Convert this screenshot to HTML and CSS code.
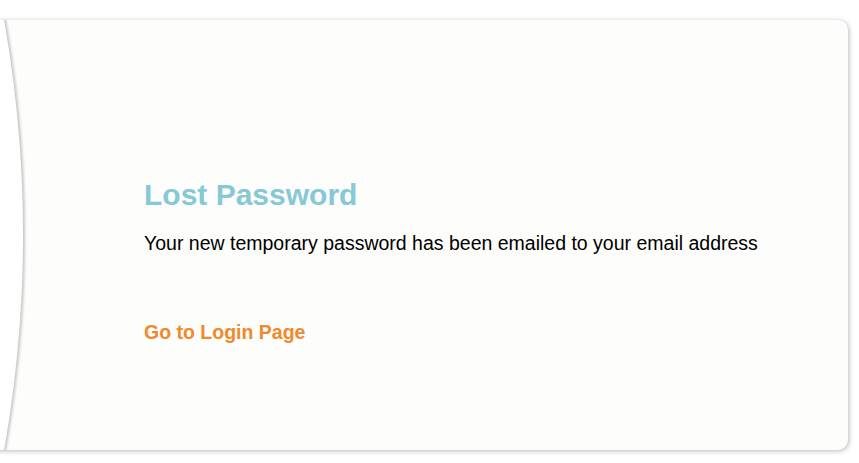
FILE: index.html
```html
<!DOCTYPE html>
<html>
<head>
<meta charset="utf-8">
<title>Lost Password</title>
<link rel="stylesheet" href="styles.css">
</head>
<body>
<div class="card">
  <div class="content">
    <h1 class="title">Lost Password</h1>
    <p class="message">Your new temporary password has been emailed to your email address</p>
    <a class="login-link" href="#">Go to Login Page</a>
  </div>
</div>
</body>
</html>
```

FILE: styles.css
```css
html, body {
  margin: 0;
  padding: 0;
  background: #ffffff;
  overflow: hidden;
}

body {
  font-family: "Liberation Sans", Arial, sans-serif;
  width: 859px;
  height: 463px;
}

.card {
  position: relative;
  overflow: hidden;
  box-sizing: border-box;
  margin: 20px 11px 0 -10px;
  height: 430px;
  background: #fdfdfb;
  border-radius: 0 10px 10px 0;
  box-shadow: 1px 1px 5px rgba(0, 0, 0, 0.28);
}

.card::before {
  content: "";
  position: absolute;
  width: 2452px;
  height: 2452px;
  border-radius: 50%;
  left: calc(33px - 2452px);
  top: calc(215px - 1226px);
  background: #ffffff;
  box-shadow: 2px 0 3px rgba(0, 0, 0, 0.22);
}

.content {
  position: relative;
  padding: 157px 0 0 154px;
}

.title {
  margin: 0;
  font-size: 30px;
  line-height: 36px;
  font-weight: bold;
  color: #86c9d6;
}

.message {
  margin: 18px 0 0 0;
  font-size: 19.5px;
  line-height: 24px;
  color: #000000;
}

.login-link {
  display: block;
  margin-top: 65px;
  font-size: 19.5px;
  line-height: 24px;
  font-weight: bold;
  color: #f0892b;
  text-decoration: none;
}
```
